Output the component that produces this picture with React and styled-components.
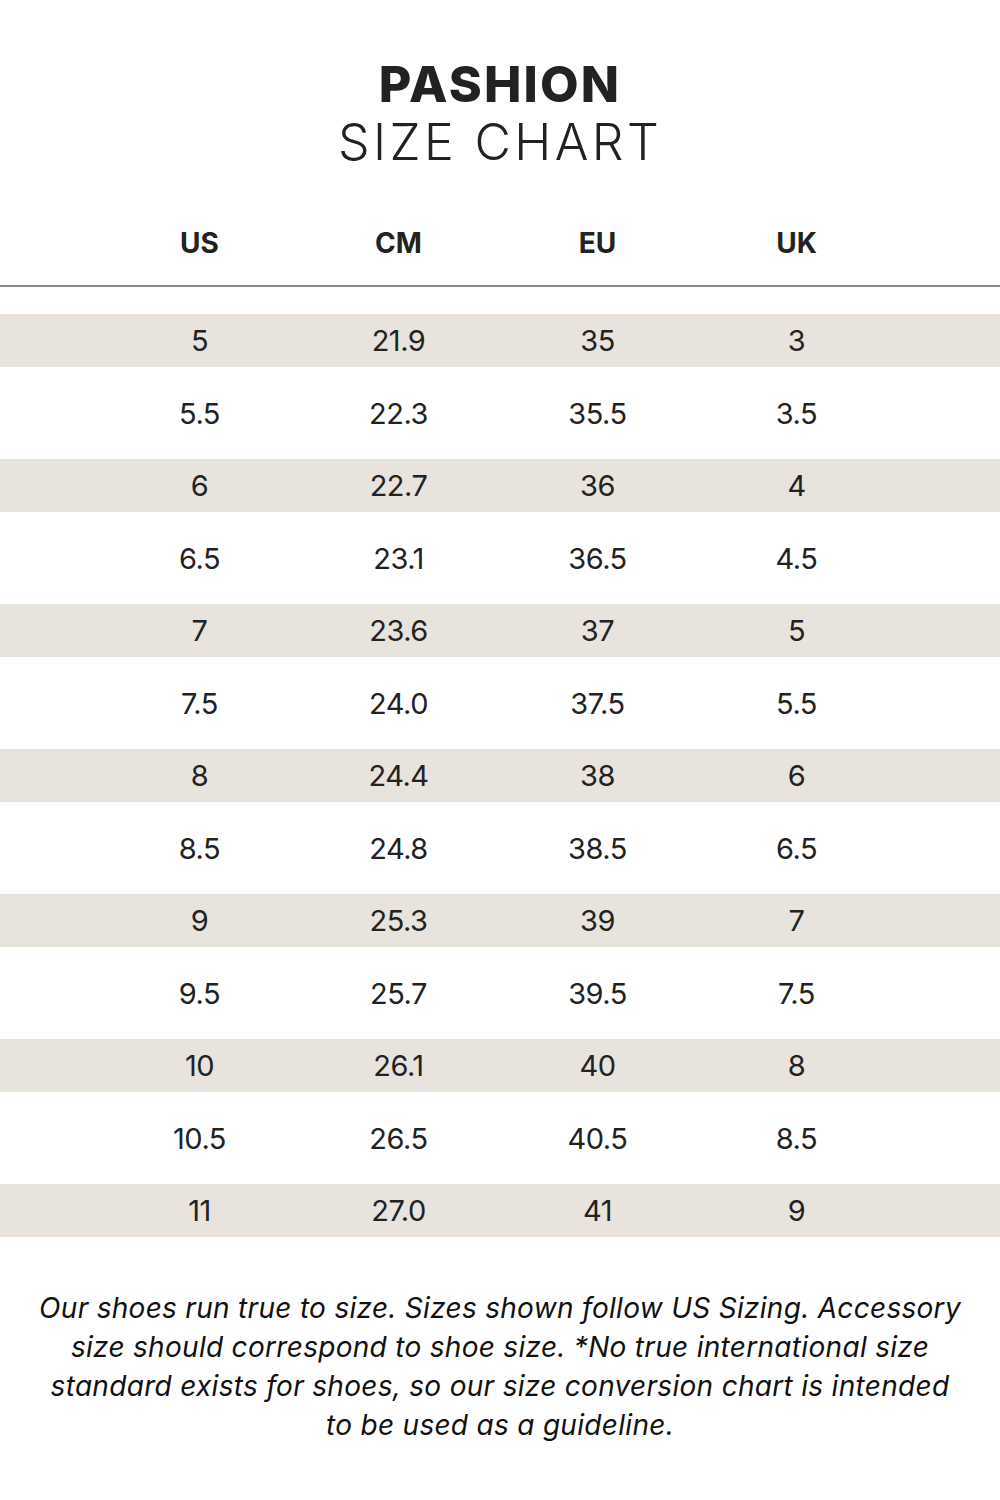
import React from "react";
import styled, { createGlobalStyle } from "styled-components";

const Global = createGlobalStyle`
  html, body { margin: 0; padding: 0; background: #fff; }
  body { font-family: "Inter", "Open Sans", sans-serif; color: #222; }
`;

const Page = styled.div`
  width: 1000px;
  padding-top: 56px;
  padding-bottom: 60px;
  display: flex;
  flex-direction: column;
  align-items: center;
`;

const Title = styled.h1`
  margin: 0;
  font-family: "Inter", sans-serif;
  font-weight: 800;
  font-size: 50px;
  line-height: 56px;
  letter-spacing: 2.2px;
  color: #222;
`;

const Subtitle = styled.h2`
  margin: 0;
  font-family: "Inter", sans-serif;
  font-weight: 300;
  font-size: 50px;
  line-height: 60px;
  letter-spacing: 3.4px;
  color: #222;
`;

const Table = styled.div`
  width: 100%;
  margin-top: 29px;
  display: flex;
  flex-direction: column;
`;

const HeaderRow = styled.div`
  display: grid;
  grid-template-columns: repeat(4, 199px);
  padding-left: 100px;
  height: 84px;
  align-items: center;
  border-bottom: 2px solid #8a8a8a;
  margin-bottom: 27px;
`;

const HeadCell = styled.div`
  text-align: center;
  font-weight: 700;
  font-size: 28px;
  color: #222;
`;

const Row = styled.div`
  display: grid;
  grid-template-columns: repeat(4, 199px);
  padding-left: 100px;
  align-items: center;
  height: ${(p) => (p.$shaded ? "53px" : "92px")};
  background: ${(p) => (p.$shaded ? "#e8e3dd" : "transparent")};
`;

const Cell = styled.div`
  text-align: center;
  font-weight: 400;
  font-size: 29px;
  letter-spacing: -0.5px;
  color: #222;
`;

const Note = styled.p`
  margin: 52px 0 0;
  font-family: "Inter", sans-serif;
  font-style: italic;
  font-weight: 400;
  font-size: 28px;
  line-height: 39px;
  letter-spacing: 0.3px;
  text-align: center;
  color: #111;
  white-space: nowrap;
`;

const rows = [
  ["5", "21.9", "35", "3"],
  ["5.5", "22.3", "35.5", "3.5"],
  ["6", "22.7", "36", "4"],
  ["6.5", "23.1", "36.5", "4.5"],
  ["7", "23.6", "37", "5"],
  ["7.5", "24.0", "37.5", "5.5"],
  ["8", "24.4", "38", "6"],
  ["8.5", "24.8", "38.5", "6.5"],
  ["9", "25.3", "39", "7"],
  ["9.5", "25.7", "39.5", "7.5"],
  ["10", "26.1", "40", "8"],
  ["10.5", "26.5", "40.5", "8.5"],
  ["11", "27.0", "41", "9"],
];

export default function App() {
  return (
    <>
      <Global />
      <Page>
        <Title>PASHION</Title>
        <Subtitle>SIZE CHART</Subtitle>
        <Table>
          <HeaderRow>
            {["US", "CM", "EU", "UK"].map((h) => (
              <HeadCell key={h}>{h}</HeadCell>
            ))}
          </HeaderRow>
          {rows.map((r, i) => (
            <Row key={i} $shaded={i % 2 === 0}>
              {r.map((c, j) => (
                <Cell key={j}>{c}</Cell>
              ))}
            </Row>
          ))}
        </Table>
        <Note>
          Our shoes run true to size. Sizes shown follow US Sizing. Accessory
          <br />
          size should correspond to shoe size. *No true international size
          <br />
          standard exists for shoes, so our size conversion chart is intended
          <br />
          to be used as a guideline.
        </Note>
      </Page>
    </>
  );
}
